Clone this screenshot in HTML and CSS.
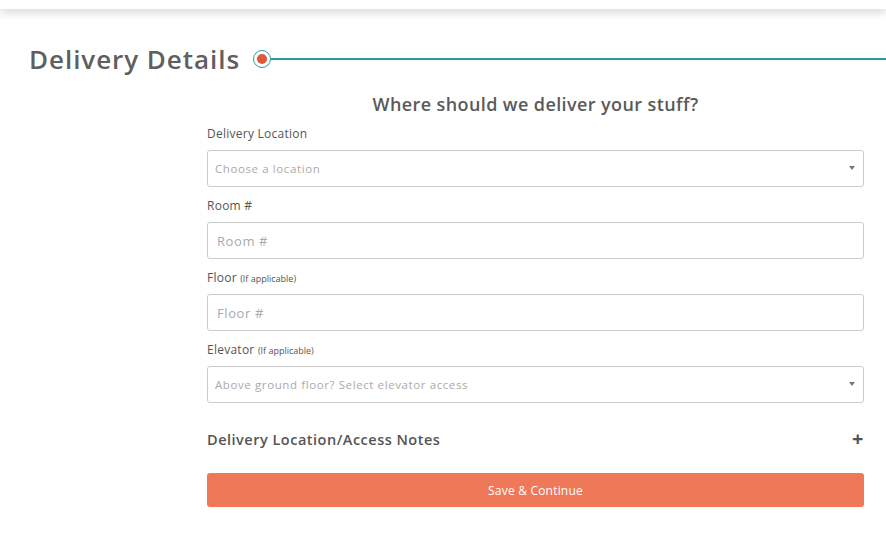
FILE: index.html
```html
<!DOCTYPE html>
<html lang="en">
<head>
    <meta charset="UTF-8">
    <meta name="viewport" content="width=device-width, initial-scale=1.0">
    <title>Delivery Details</title>
    <link rel="stylesheet" href="styles.css">
</head>
<body>

<div class="topbar"></div>

<div class="section-head">
    <h1>Delivery Details</h1>
    <span class="step-dot"></span>
    <span class="step-line"></span>
</div>

<form class="delivery-form" onsubmit="return false">
    <h2>Where should we deliver your stuff?</h2>

    <label class="field-label" for="location">Delivery Location</label>
    <div class="select-wrap">
        <select id="location">
            <option value="">Choose a location</option>
        </select>
    </div>

    <label class="field-label" for="room">Room #</label>
    <input type="text" id="room" placeholder="Room #">

    <label class="field-label" for="floor">Floor <small>(If applicable)</small></label>
    <input type="text" id="floor" placeholder="Floor #">

    <label class="field-label" for="elevator">Elevator <small>(If applicable)</small></label>
    <div class="select-wrap">
        <select id="elevator">
            <option value="">Above ground floor? Select elevator access</option>
        </select>
    </div>

    <div class="notes-toggle">
        <span>Delivery Location/Access Notes</span>
        <span class="plus">+</span>
    </div>

    <button type="submit">Save &amp; Continue</button>
</form>

</body>
</html>
```

FILE: styles.css
```css
body {
    font-family: "Open Sans", Arial, sans-serif;
    background: #fff;
    color: #555;
    margin: 0;
    overflow: hidden;
}
.topbar {
    height: 9px;
    background: #fff;
    box-shadow: 0 3px 10px rgba(0, 0, 0, 0.18);
}
.section-head {
    display: flex;
    align-items: center;
    padding: 32px 0 0 29px;
}
.section-head h1 {
    margin: 0;
    font-size: 26px;
    font-weight: 600;
    color: #5f5f5f;
    letter-spacing: 0.95px;
    line-height: 36px;
}
.step-dot {
    width: 18px;
    height: 18px;
    margin-left: 13px;
    border: 1.5px solid #2a9d9a;
    border-radius: 50%;
    box-sizing: border-box;
    display: flex;
    align-items: center;
    justify-content: center;
    flex-shrink: 0;
}
.step-dot::after {
    content: "";
    width: 10px;
    height: 10px;
    border-radius: 50%;
    background: #e1593a;
}
.step-line {
    flex: 1;
    height: 1.5px;
    background: #2a9d9a;
}
.delivery-form {
    width: 657px;
    margin: 14px 0 0 207px;
    display: flex;
    flex-direction: column;
}
.delivery-form h2 {
    margin: 0 0 8px;
    text-align: center;
    font-size: 18px;
    font-weight: 600;
    color: #5a5a5a;
    letter-spacing: 0.4px;
    line-height: 26px;
}
.field-label {
    font-size: 12px;
    color: #555;
    letter-spacing: 0.25px;
    line-height: 18px;
    height: 18px;
    margin-bottom: 7px;
}
.field-label small {
    font-size: 9px;
    line-height: 1;
    letter-spacing: 0;
}
input, select {
    width: 100%;
    height: 37px;
    box-sizing: border-box;
    border: 1px solid #ccc;
    border-radius: 3px;
    background: #fff;
    font-family: inherit;
    margin-bottom: 10px;
}
input {
    padding: 0 9px;
    font-size: 13px;
    letter-spacing: 0.6px;
}
input::placeholder {
    color: #aaa;
}
.select-wrap {
    position: relative;
}
select {
    appearance: none;
    -webkit-appearance: none;
    padding: 0 7px;
    font-size: 11.5px;
    letter-spacing: 0.6px;
    color: #aaa;
}
.select-wrap::after {
    content: "";
    position: absolute;
    right: 9px;
    top: 16px;
    border-left: 3px solid transparent;
    border-right: 3px solid transparent;
    border-top: 4px solid #777;
}
.notes-toggle {
    display: flex;
    justify-content: space-between;
    align-items: center;
    margin-top: 16px;
    font-size: 14.5px;
    font-weight: 600;
    letter-spacing: 0.5px;
    color: #555;
}
.plus {
    font-size: 20px;
    font-weight: 700;
    color: #555;
    line-height: 20px;
}
button {
    margin-top: 24px;
    height: 34px;
    border: none;
    border-radius: 3px;
    background: #ef7858;
    color: #fff;
    font-family: inherit;
    font-size: 12px;
    letter-spacing: 0.2px;
    cursor: pointer;
}
button:hover {
    background: #e56a49;
}
```
